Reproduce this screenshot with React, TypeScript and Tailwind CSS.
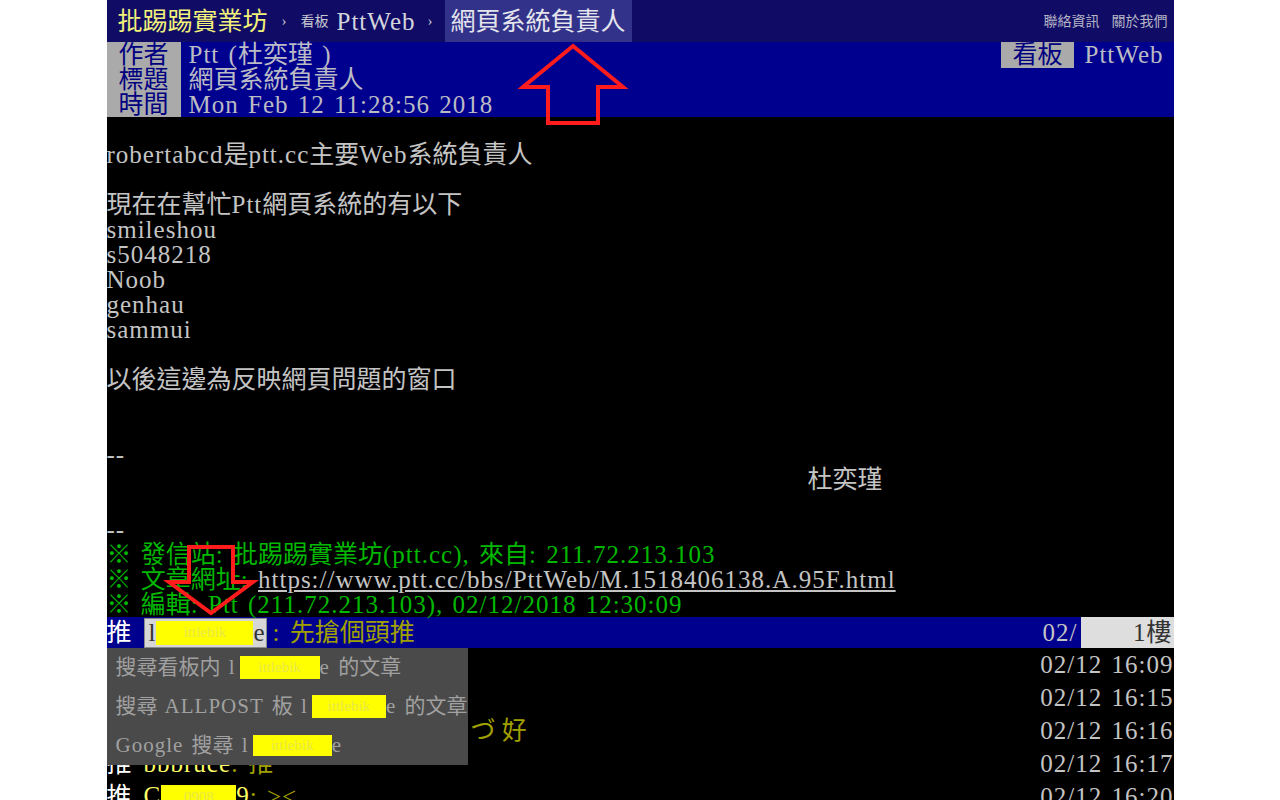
import type { ReactNode } from "react";

const ASCII = /^[\x20-\x7e]+$/;

// Latin runs get a bit of tracking so they roughly keep the half-width
// cell of a BBS terminal; CJK stays at 1em.
function T({ children }: { children: string }) {
  return (
    <>
      {children.split(/([\x20-\x7e]+)/).map((part, i) =>
        ASCII.test(part) ? (
          <span key={i} className="tracking-[1px] [word-spacing:2px]">
            {part}
          </span>
        ) : (
          part
        )
      )}
    </>
  );
}

function Line({ children, className = "" }: { children?: ReactNode; className?: string }) {
  return <div className={`h-[25px] leading-[25px] ${className}`}>{children}</div>;
}

// yellow marker used to hide ids, the letters only show through faintly
function Redact({ className, text }: { className: string; text: string }) {
  return (
    <span
      className={`inline-flex items-center justify-center overflow-hidden bg-[#ffff00] align-middle text-[15px] leading-none text-[#e8e84a] ${className}`}
    >
      {text}
    </span>
  );
}

function TopBar() {
  return (
    <div className="flex h-[42px] items-center justify-between bg-[#100c66] pl-[11px] pr-[6px]">
      <div className="flex h-full items-center">
        <span className="text-[25px] text-[#f2f27a]">批踢踢實業坊</span>
        <span className="mx-[14px] text-[15px] text-[#c8c8d0]">›</span>
        <span className="text-[14px] text-[#c8c8d0]">看板</span>
        <span className="ml-[8px] text-[25px] text-[#d4d4dc]">
          <T>PttWeb</T>
        </span>
        <span className="mx-[12px] text-[15px] text-[#c8c8d0]">›</span>
        <span className="flex h-full items-center bg-[#32328a] px-[6px] text-[25px] text-[#e4e4ec]">
          網頁系統負責人
        </span>
      </div>
      <div className="flex gap-[12px] text-[14px] text-[#b4b4c4]">
        <a>聯絡資訊</a>
        <a>關於我們</a>
      </div>
    </div>
  );
}

function Meta() {
  const tag = "bg-[#aaaaaa] px-[12px] text-[#000080]";
  return (
    <div className="bg-[#00008e] text-[#bbbbc4]">
      <div className="flex h-[25px] leading-[25px]">
        <span className={tag}>作者</span>
        <span className="pl-[8px]">
          <T>Ptt (杜奕瑾 )</T>
        </span>
        <span className="ml-auto h-[26px] bg-[#aaaaaa] px-[11px] text-[#000080]">看板</span>
        <span className="pl-[11px] pr-[10px]">
          <T>PttWeb</T>
        </span>
      </div>
      <div className="flex h-[25px] leading-[25px]">
        <span className={tag}>標題</span>
        <span className="pl-[8px]">網頁系統負責人</span>
      </div>
      <div className="flex h-[25px] leading-[25px]">
        <span className={tag}>時間</span>
        <span className="pl-[8px]">
          <T>Mon Feb 12 11:28:56 2018</T>
        </span>
      </div>
    </div>
  );
}

function Body() {
  return (
    <div className="text-[#c4c4c4]">
      <Line />
      <Line>
        <T>robertabcd是ptt.cc主要Web系統負責人</T>
      </Line>
      <Line />
      <Line>
        <T>現在在幫忙Ptt網頁系統的有以下</T>
      </Line>
      <Line>
        <T>smileshou</T>
      </Line>
      <Line>
        <T>s5048218</T>
      </Line>
      <Line>
        <T>Noob</T>
      </Line>
      <Line>
        <T>genhau</T>
      </Line>
      <Line>
        <T>sammui</T>
      </Line>
      <Line />
      <Line>以後這邊為反映網頁問題的窗口</Line>
      <Line />
      <Line />
      <Line>
        <T>--</T>
      </Line>
      <Line className="pl-[701px]">杜奕瑾</Line>
      <Line />
      <Line>
        <T>--</T>
      </Line>
      <Line className="text-[#00b800]">
        <T>※ 發信站: 批踢踢實業坊(ptt.cc), 來自: 211.72.213.103</T>
      </Line>
      <Line className="text-[#00b800]">
        <T>※ 文章網址: </T>
        <a className="text-[#c4c4c4] underline">
          <T>https://www.ptt.cc/bbs/PttWeb/M.1518406138.A.95F.html</T>
        </a>
      </Line>
      <Line className="text-[#00b800]">
        <T>※ 編輯: Ptt (211.72.213.103), 02/12/2018 12:30:09</T>
      </Line>
    </div>
  );
}

function Time({ children }: { children: string }) {
  return (
    <span className="ml-auto text-[#c4c4c4]">
      <T>{children}</T>
    </span>
  );
}

function Pushes() {
  const row = "flex h-[33px] items-center";
  const tag = "inline-block w-[37px] text-white";
  const user = "text-[#ffff66]";
  const say = "text-[#a0a000]";
  return (
    <div>
      <div className="flex h-[31px] items-center bg-[#00008e]">
        <span className={tag}>推</span>
        <span className="flex h-[30px] items-center border border-[#8a8a8a] bg-[#d6d6d6] pl-[4px] text-[#333333]">
          <T>l</T>
          <Redact className="h-[24px] w-[97px]" text="ittlebik" />
          <T>e</T>
        </span>
        <span className={`${say} pl-[6px]`}>
          <T>: 先搶個頭推</T>
        </span>
        <span className="ml-auto flex h-full items-center">
          <span className="text-[#c4c4c4]">
            <T>02/</T>
          </span>
          <span className="ml-[3px] flex h-full w-[93px] items-center justify-end bg-[#dedede] pr-[2px] text-[#333333]">
            <T>1樓</T>
          </span>
        </span>
      </div>
      <div className={row}>
        <span className={tag}>推</span>
        <span className={user}>
          <T>kenny</T>
        </span>
        <span className={say}>
          <T>: 推</T>
        </span>
        <Time>02/12 16:09</Time>
      </div>
      <div className={row}>
        <span className={tag}>推</span>
        <span className={user}>
          <T>mouse</T>
        </span>
        <span className={say}>
          <T>: 辛苦了</T>
        </span>
        <Time>02/12 16:15</Time>
      </div>
      <div className={row}>
        <span className={tag}>推</span>
        <span className="inline-block w-[327px] overflow-hidden whitespace-nowrap">
          <span className={user}>
            <T>hsiao</T>
          </span>
          <span className={say}>
            <T>: 大家加油</T>
          </span>
        </span>
        <span className={say}>づ 好</span>
        <Time>02/12 16:16</Time>
      </div>
      <div className={row}>
        <span className={tag}>推</span>
        <span className={user}>
          <T>bbbruce</T>
        </span>
        <span className={say}>
          <T>: 推</T>
        </span>
        <Time>02/12 16:17</Time>
      </div>
      <div className={row}>
        <span className={tag}>推</span>
        <span className={user}>
          <T>C</T>
          <Redact className="h-[25px] w-[75px]" text="0908" />
          <T>9</T>
        </span>
        <span className={say}>
          <T>: &gt;&lt;</T>
        </span>
        <Time>02/12 16:20</Time>
      </div>
    </div>
  );
}

function SearchMenu() {
  const item = "flex h-[39px] items-center pl-[9px]";
  return (
    <div className="absolute left-0 top-[648px] h-[117px] w-[361px] bg-[#4a4a4a] text-[21px] text-[#a0a0a0]">
      <div className={item}>
        <T>搜尋看板内 l</T>
        <Redact className="ml-[4px] h-[23px] w-[80px]" text="ittlebik" />
        <T>e 的文章</T>
      </div>
      <div className={item}>
        <T>搜尋 ALLPOST 板 l</T>
        <Redact className="ml-[4px] h-[23px] w-[78px]" text="ittlebik" />
        <T>e 的文章</T>
      </div>
      <div className={item}>
        <T>Google 搜尋 l</T>
        <Redact className="ml-[4px] h-[21px] w-[79px]" text="ittlebik" />
        <T>e</T>
      </div>
    </div>
  );
}

function Arrows() {
  return (
    <svg
      className="pointer-events-none absolute left-0 top-0"
      width="1067"
      height="800"
      fill="none"
      stroke="#ff1c1c"
      strokeWidth="4"
    >
      <polygon points="466,46 516,87 491,87 491,123 441,123 441,87 416,87" />
      <polygon points="82,547 126,547 126,582 146,582 104,613 62,582 82,582" />
    </svg>
  );
}

export default function App() {
  return (
    <div className="min-h-screen bg-white font-['Liberation_Serif','Noto_Sans_CJK_TC',serif]">
      <div className="relative mx-auto h-[800px] w-[1067px] overflow-hidden whitespace-pre bg-black text-[25px] leading-[25px] text-[#c4c4c4]">
        <TopBar />
        <Meta />
        <Body />
        <Pushes />
        <SearchMenu />
        <Arrows />
      </div>
    </div>
  );
}
